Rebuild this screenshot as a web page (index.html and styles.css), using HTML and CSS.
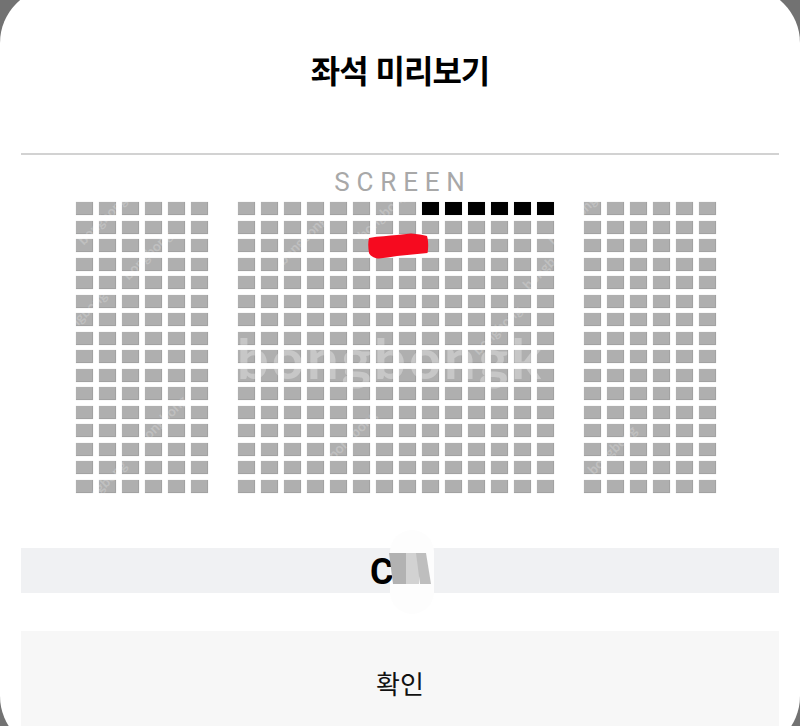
FILE: index.html
```html
<!DOCTYPE html>
<html lang="ko">
<head>
<meta charset="utf-8">
<title>좌석 미리보기</title>
<link rel="stylesheet" href="styles.css">
</head>
<body>
<main class="sheet">
  <h1 class="title">좌석 미리보기</h1>
  <div class="screen">SCREEN</div>
  <section class="seatmap">
    <div class="block block-side" data-cols="6"></div>
    <div class="block block-center" data-cols="14"></div>
    <div class="block block-side" data-cols="6"></div>
    <svg class="scribble" viewBox="0 0 62 27" aria-hidden="true"><path d="M2 5 C12 3 22 3 30 2 L44 .5 C50 1 56 2 60 3 C61.500 8 61.500 15 60.500 20 L30 23 C24 24 17 25 12 25.500 C8 25.500 3 23 2 20 C1 14 1 9 2 5Z"/></svg>
    <div class="watermark" aria-hidden="true">bongbongk</div>
  </section>
  <section class="selection">
    <div class="smudge" aria-hidden="true"></div>
    <span class="row-label">C</span>
    <svg class="seat-icon" viewBox="0 0 42 31" aria-hidden="true">
      <path class="seg-dark" d="M0 0H17V31H4Z"/>
      <path class="seg-light" d="M17 0H30V31H17Z"/>
      <path class="seg-mid" d="M27 0H37L42 31H31Z"/>
    </svg>
  </section>
  <button class="confirm" type="button">확인</button>
</main>
<script src="script.js"></script>
</body>
</html>
```
FILE: styles.css
```css
* { box-sizing: border-box; }
html, body { margin: 0; height: 100%; }
body {
  overflow: hidden;
  background: #727272;
  font-family: "Noto Sans CJK KR", "Liberation Sans", sans-serif;
}
.sheet {
  margin-top: -13px;
  height: 765px;
  padding: 0 21px;
  background: #fff;
  border-radius: 56px;
  display: flex;
  flex-direction: column;
  overflow: hidden;
}
.title {
  margin: 0;
  height: 168px;
  padding-top: 57px;
  border-bottom: 2px solid #d2d2d2;
  font-size: 32px;
  line-height: 50px;
  font-weight: 700;
  letter-spacing: -1px;
  text-align: center;
  color: #000;
}
.screen {
  height: 47px;
  padding-top: 12px;
  padding-left: 6px;
  font-family: Roboto, "Liberation Sans", sans-serif;
  font-size: 26px;
  line-height: 30px;
  letter-spacing: 6.800px;
  text-align: center;
  color: #a8a8a8;
}
.seatmap {
  position: relative;
  display: flex;
  gap: 30.500px;
  height: 291px;
  padding-left: 55.300px;
}
.block {
  display: grid;
  grid-auto-rows: 13px;
  column-gap: 5.950px;
  row-gap: 5.530px;
  align-content: start;
}
.block-side { grid-template-columns: repeat(6, 17px); }
.block-center { grid-template-columns: repeat(14, 17px); }
.seat {
  background: #afafaf;
  border-right: 1px solid #a2a2a2;
  border-bottom: 1px solid #a2a2a2;
  box-shadow: 0 0 1px rgba(0, 0, 0, .18);
}
.seat-taken { background: #000; border-color: #000; }
.scribble {
  position: absolute;
  left: 346px;
  top: 31px;
  width: 62px;
  height: 27px;
  fill: #f60a1f;
}
.watermark {
  position: absolute;
  left: 216px;
  top: 116px;
  font-family: Lato, "Liberation Sans", sans-serif;
  font-size: 56px;
  line-height: 80px;
  font-weight: 700;
  letter-spacing: 3px;
  white-space: nowrap;
  color: rgba(255, 255, 255, .3);
}
.mark {
  position: absolute;
  font-family: Lato, "Liberation Sans", sans-serif;
  font-size: 14px;
  line-height: 16px;
  font-weight: 700;
  white-space: nowrap;
  color: rgba(255, 255, 255, .22);
  transform: rotate(-45deg);
}
.selection {
  position: relative;
  margin-top: 55px;
  height: 45px;
  padding-left: 1px;
  background: #f0f1f3;
  display: flex;
  justify-content: center;
  align-items: center;
}
.row-label {
  position: relative;
  width: 19px;
  font-family: Roboto, "Liberation Sans", sans-serif;
  font-size: 36px;
  line-height: 45px;
  font-weight: 700;
  color: #000;
  margin-top: 3px;
}
.seat-icon {
  position: relative;
  width: 42px;
  height: 31px;
  margin-top: -4px;
}
.seg-dark { fill: #b2b2b2; }
.seg-light { fill: #d2d2d2; }
.seg-mid { fill: #bebebe; }
.smudge {
  position: absolute;
  left: 369px;
  top: -18px;
  width: 44px;
  height: 84px;
  background: #fdfdfd;
  border-radius: 22px;
}
.confirm {
  margin-top: 38px;
  height: 96px;
  flex: none;
  padding: 7px 0 0;
  width: 100%;
  border: 0;
  background: #f7f7f7;
  font-family: inherit;
  font-size: 26px;
  line-height: 50px;
  color: #111;
}
```
FILE: script.js
```js
// Seat map: 16 rows in each block; the first row's last six centre seats are taken.
document.querySelectorAll('.block').forEach(function (block) {
  var cols = Number(block.dataset.cols);
  var center = block.classList.contains('block-center');
  for (var row = 0; row < 16; row++) {
    for (var col = 0; col < cols; col++) {
      var seat = document.createElement('span');
      seat.className = 'seat';
      if (center && row === 0 && col >= 8) seat.classList.add('seat-taken');
      block.appendChild(seat);
    }
  }
});

// Faint tiled watermark, placed relative to the seat map.
var map = document.querySelector('.seatmap');
[[50, 10], [95, 45], [250, 30], [330, 5], [495, 55], [50, 275], [30, 105], [300, 225], [520, 10], [110, 210], [560, 240], [445, 120]].forEach(function (p) {
  var mark = document.createElement('span');
  mark.className = 'mark';
  mark.textContent = 'bongbong';
  mark.setAttribute('aria-hidden', 'true');
  mark.style.left = p[0] + 'px';
  mark.style.top = p[1] + 'px';
  map.appendChild(mark);
});
```
